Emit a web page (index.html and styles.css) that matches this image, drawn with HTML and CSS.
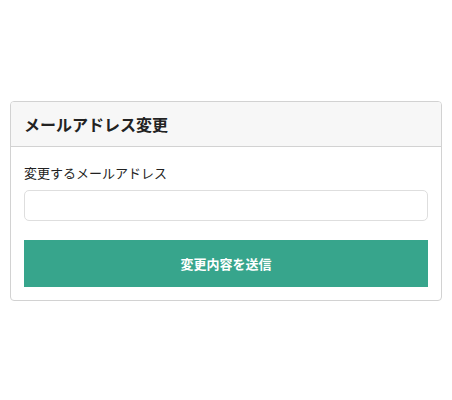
FILE: index.html
```html
<!DOCTYPE html>
<html lang="ja">
<head>
<meta charset="UTF-8">
<meta name="viewport" content="width=device-width, initial-scale=1.0">
<title>メールアドレス変更</title>
<link rel="stylesheet" href="styles.css">
</head>
<body>

<div class="email-card">
    <!-- Header -->
    <div class="email-card-header">メールアドレス変更</div>

    <!-- Body -->
    <div class="email-card-body">
        <label class="email-label" for="new-email">変更するメールアドレス</label>
        <input type="email" id="new-email" class="email-input">
        <button type="submit" class="submit-button">変更内容を送信</button>
    </div>
</div>

</body>
</html>
```

FILE: styles.css
```css
body {
    margin: 0;
    padding: 101px 10px 0 10px;
    font-family: "Noto Sans CJK JP", "Noto Sans", sans-serif;
    color: #222;
    background-color: #fff;
}

.email-card {
    width: 430px;
    border: 1px solid #d2d2d2;
    border-radius: 4px;
    overflow: hidden;
}

.email-card-header {
    height: 44px;
    display: flex;
    align-items: center;
    padding: 0 13px;
    background-color: #f7f7f7;
    border-bottom: 1px solid #d2d2d2;
    font-size: 16px;
    font-weight: bold;
    color: #222;
}

.email-card-body {
    display: flex;
    flex-direction: column;
    padding: 16px 13px 13px 13px;
}

.email-label {
    font-size: 13px;
    line-height: 20px;
    color: #222;
    margin-bottom: 7px;
}

.email-input {
    box-sizing: border-box;
    height: 31px;
    border: 1px solid #dedede;
    border-radius: 5px;
    padding: 0 10px;
    font-size: 13px;
    outline: none;
    margin-bottom: 19px;
}

.submit-button {
    height: 47px;
    border: none;
    background-color: #37a58c;
    color: #fff;
    font-family: inherit;
    font-size: 13px;
    font-weight: bold;
    cursor: pointer;
}
```
